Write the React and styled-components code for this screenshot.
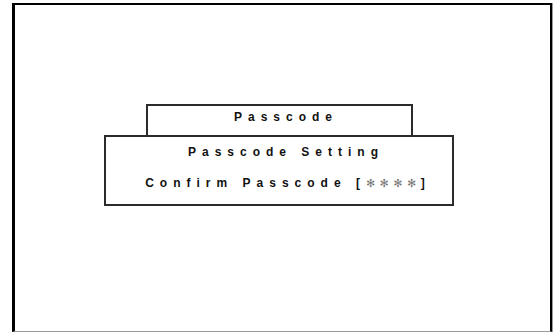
import React from 'react';
import styled, { createGlobalStyle } from 'styled-components';

const GlobalStyle = createGlobalStyle`
  html, body {
    margin: 0;
    padding: 0;
    background: #ffffff;
  }
  body {
    font-family: "Liberation Sans", Arial, sans-serif;
  }
`;

//Screen frame
const Frame = styled.div`
  box-sizing: border-box;
  width: 540px;
  height: 329px;
  margin: 3px 0 0 12px;
  border-top: 2px solid #000;
  border-left: 3px solid #000;
  border-right: 2px solid #000;
  border-bottom: 1px solid #9a9a9a;
  box-shadow: 1px 0 0 #9a9a9a;
  display: flex;
  flex-direction: column;
  align-items: center;
  padding: 99px 7px 0 0;
`;

//Dialog
const Title = styled.div`
  box-sizing: border-box;
  width: 267px;
  height: 33px;
  border: 2px solid #2b2b2b;
  margin-bottom: -2px;
  padding-top: 4px;
`;

const Panel = styled.div`
  box-sizing: border-box;
  width: 350px;
  height: 71px;
  border: 2px solid #2b2b2b;
  padding-top: 8px;
  display: flex;
  flex-direction: column;
  gap: 17px;
`;

const Line = styled.div`
  font-size: 12px;
  line-height: 14px;
  font-weight: bold;
  letter-spacing: 6px;
  color: #111;
  text-align: center;
  white-space: pre;
  padding-left: ${(props) => props.shift || 14}px;
`;

const Star = styled.span`
  font-family: "DejaVu Sans", sans-serif;
  font-weight: normal;
  font-size: 11px;
  letter-spacing: 4.5px;
  color: #7a7a7a;
`;

export default function App() {
  return (
    <>
      <GlobalStyle />
      <Frame>
        <Title>
          <Line>Passcode</Line>
        </Title>
        <Panel>
          <Line>Passcode Setting</Line>
          <Line shift={18}>
            Confirm Passcode [<Star>✻✻✻✻</Star>]
          </Line>
        </Panel>
      </Frame>
    </>
  );
}
